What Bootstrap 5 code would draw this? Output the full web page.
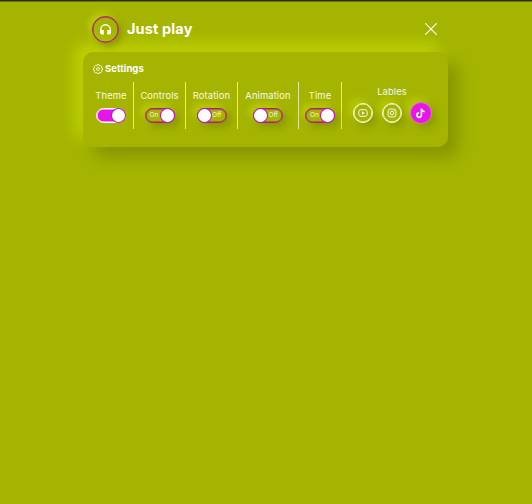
<!DOCTYPE html>
<html lang="en">
<head>
<meta charset="utf-8">
<meta name="viewport" content="width=device-width, initial-scale=1">
<title>Just play</title>
<link href="https://cdn.jsdelivr.net/npm/bootstrap@5.3.0/dist/css/bootstrap.min.css" rel="stylesheet">
<style>
:root { --base: #a4b400; --shade: #8b9900; --accent: #e516e8; --ring: #b5178e; }
body { background: var(--base); color: #fff; font-family: Inter, "Open Sans", sans-serif; min-height: 504px; border-top: 1px solid #292d0b; box-shadow: inset 0 1px 0 #69730a; overflow: hidden; }
.player { width: 365px; margin-left: 83px; }
.player-head { height: 51px; padding: 5px 11px 0 9px; }
.logo { width: 27px; height: 27px; border: 1px solid var(--ring); box-shadow: inset 0 0 0 .5px var(--ring), 3px 3px 7px var(--shade), -3px -3px 7px #c0d300; }
.title-text { font-size: 14.5px; font-weight: 700; letter-spacing: .13px; line-height: 20px; margin-left: 8px; }
.panel { height: 95px; border-radius: 10px; background: var(--base); box-shadow: 10px 10px 16px #879500, -8px -8px 16px #c2d500; }
.panel-title { height: 12px; padding-left: 10px; padding-top: 11px; box-sizing: content-box; font-size: 9.5px; line-height: 12px; font-weight: 700; letter-spacing: .06px; gap: 2px; }
.settings { height: 47px; margin-top: 7px; padding-left: 6px; }
.option { border-right: 1px solid #e3e8a8; padding-top: 7px; gap: 6px; flex: none; }
.option-label { font-size: 9.4px; line-height: 13px; letter-spacing: .12px; white-space: nowrap; color: #fafbe9; }
.w-theme { width: 45px; } .w-mid { width: 52px; } .w-anim { width: 61px; } .w-time { width: 43px; }
.switch { width: 30px; height: 15px; border: 1px solid var(--ring); padding: 0 4px; font-size: 6.5px; line-height: 13px; box-shadow: inset 0 0 0 .5px var(--ring), 4px 4px 7px var(--shade), -4px -4px 7px #bccd00; position: relative; color: #fafbe9; }
.switch::after { content: ""; position: absolute; width: 13px; height: 13px; top: 0; right: 0; border-radius: 50%; background: #fff; box-shadow: 0 0 0 1px #c413c4; }
.switch.is-off { text-align: right; }
.switch.is-off::after { right: auto; left: 0; }
.switch.is-theme { background: var(--accent); border-color: #fff; box-shadow: inset 0 0 0 .6px #fff; }
.labels { flex: 1; padding: 3px 6px 0 0; gap: 4px; }
.platforms { gap: 9px; }
.platform { width: 20px; height: 20px; border: 1px solid #fbfde2; box-shadow: inset 0 0 0 .6px #fbfde2, 4px 4px 8px var(--shade), -4px -4px 8px #bccd00; }
.platform.is-active { width: 22px; height: 22px; margin-left: -1px; background: var(--accent); border-color: #e86fc4; box-shadow: 4px 4px 9px var(--shade), -4px -4px 9px #bccd00; }
svg { display: block; flex: none; }
</style>
<script src="https://cdn.jsdelivr.net/npm/bootstrap@5.3.0/dist/js/bootstrap.bundle.min.js"></script>
</head>
<body>
<main class="player">
  <header class="player-head d-flex align-items-center">
    <div class="logo rounded-circle d-flex align-items-center justify-content-center">
      <svg width="13" height="13" viewBox="0 0 24 24" fill="#fff"><path d="M12 2a10 10 0 0 0-10 10v6a3 3 0 0 0 3 3h4v-8H4.500v-1a7.500 7.500 0 0 1 15 0v1H15v8h4a3 3 0 0 0 3-3v-6A10 10 0 0 0 12 2z"/></svg>
    </div>
    <h1 class="title-text mb-0">Just play</h1>
    <svg class="ms-auto" width="12" height="12" viewBox="0 0 12 12" fill="none" stroke="#fff" stroke-width="1.2" stroke-linecap="round"><path d="M.6.6l10.800 10.800M11.400.6L.6 11.400"/></svg>
  </header>
  <section class="panel">
    <h2 class="panel-title d-flex align-items-center mb-0">
      <svg width="10" height="10" viewBox="0 0 24 24" fill="none" stroke="#fff" stroke-width="2" stroke-linejoin="round"><path d="M9.800 1.500h4.400l1 3 2.900-1.400 3.100 3.100-1.400 2.900 3 1v4.400l-3 1 1.400 2.900-3.100 3.100-2.900-1.400-1 3H9.800l-1-3-2.900 1.400-3.100-3.100 1.400-2.900-3-1v-4.400l3-1-1.400-2.900 3.100-3.100 2.900 1.400z"/><circle cx="12" cy="12" r="3.500"/></svg>
      Settings
    </h2>
    <div class="settings d-flex">
      <div class="option w-theme d-flex flex-column align-items-center"><span class="option-label">Theme</span><div class="switch is-theme rounded-pill"></div></div>
      <div class="option w-mid d-flex flex-column align-items-center"><span class="option-label">Controls</span><div class="switch rounded-pill">On</div></div>
      <div class="option w-mid d-flex flex-column align-items-center"><span class="option-label">Rotation</span><div class="switch is-off rounded-pill">Off</div></div>
      <div class="option w-anim d-flex flex-column align-items-center"><span class="option-label">Animation</span><div class="switch is-off rounded-pill">Off</div></div>
      <div class="option w-time d-flex flex-column align-items-center"><span class="option-label">Time</span><div class="switch rounded-pill">On</div></div>
      <div class="labels d-flex flex-column align-items-center">
        <span class="option-label">Lables</span>
        <div class="platforms d-flex align-items-center">
          <div class="platform rounded-circle d-flex align-items-center justify-content-center"><svg width="10" height="10" viewBox="0 0 24 24" fill="none" stroke="#fff" stroke-width="2.200"><rect x="2" y="4" width="20" height="16" rx="5"/><path d="M9.500 8v8l7-4z" fill="#fff" stroke="none"/></svg></div>
          <div class="platform rounded-circle d-flex align-items-center justify-content-center"><svg width="10" height="10" viewBox="0 0 24 24" fill="none" stroke="#fff" stroke-width="2.200"><rect x="2.500" y="2.500" width="19" height="19" rx="5"/><circle cx="12" cy="12" r="4.500"/><circle cx="17.500" cy="6.500" r=".7" fill="#fff" stroke-width="1"/></svg></div>
          <div class="platform is-active rounded-circle d-flex align-items-center justify-content-center"><svg width="11" height="11" viewBox="0 0 24 24" fill="none" stroke="#fff" stroke-width="3.600"><path d="M14 1v14.500a5 5 0 1 1-5-5M14 1c.3 4 2.800 6.500 7 6.800"/></svg></div>
        </div>
      </div>
    </div>
  </section>
</main>
</body>
</html>
